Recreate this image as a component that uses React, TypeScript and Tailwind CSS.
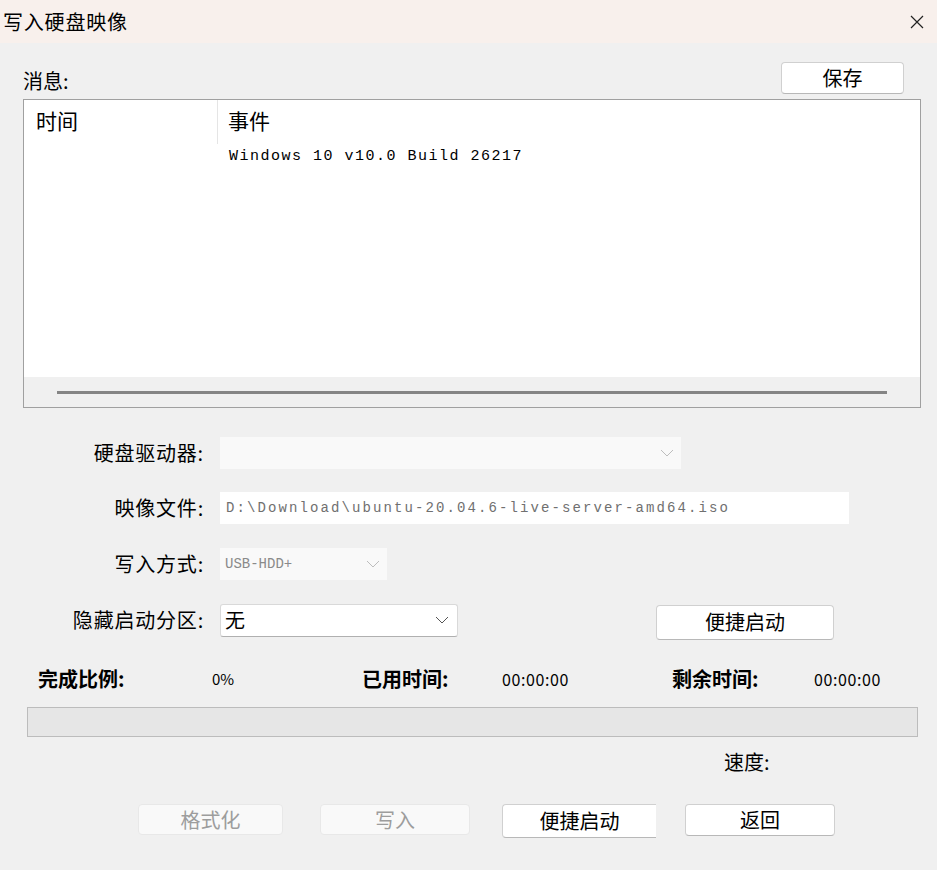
const cjk = "font-['Microsoft_YaHei','Noto_Sans_CJK_SC',sans-serif]";
const mono = "font-['Liberation_Mono','Noto_Sans_CJK_SC',monospace]";

function Chevron({ className }: { className?: string }) {
  return (
    <svg width="14" height="8" viewBox="0 0 14 8" className={className}>
      <path d="M1 1 L7 7 L13 1" fill="none" stroke="currentColor" strokeWidth="1" />
    </svg>
  );
}

function Btn({ label, disabled, className }: { label: string; disabled?: boolean; className?: string }) {
  return (
    <div
      className={
        "flex items-center justify-center rounded-[4px] border text-[20px] leading-none " +
        (disabled
          ? "border-[#e8e8e8] bg-[#f9f9f9] text-[#9d9d9d] "
          : "border-[#d0d0d0] border-b-[#b8b8b8] bg-white text-black ") +
        (className ?? "")
      }
    >
      {label}
    </div>
  );
}

export default function App() {
  return (
    <div className={"w-[937px] h-[870px] bg-[#f0f0f0] text-black " + cjk}>
      {/* title bar */}
      <div className="h-[43px] bg-[#f8f0ec] flex items-center justify-between pl-[3px] pr-[12px]">
        <span className="text-[20px] tracking-[0.8px]">写入硬盘映像</span>
        <svg width="16" height="16" viewBox="0 0 16 16">
          <path d="M2 2 L14 14 M14 2 L2 14" stroke="#222" strokeWidth="1.2" />
        </svg>
      </div>

      <div className="pl-[23px] pr-[16px]">
        <div className="flex items-end justify-between h-[56px] pb-[5px]">
          <span className="text-[20px] leading-none pb-[3px]">消息:</span>
          <Btn label="保存" className="w-[123px] h-[32px] mr-[17px]" />
        </div>

        {/* message list */}
        <div className="w-[898px] h-[309px] border border-[#a0a0a0] bg-white flex flex-col">
          <div className="flex h-[44px]">
            <div className="w-[194px] pl-[12px] pt-[10px] text-[21px] leading-none border-r border-[#e5e5e5]">时间</div>
            <div className="pl-[10px] pt-[10px] text-[21px] leading-none">事件</div>
          </div>
          <div className={"pl-[205px] pt-[2px] text-[15px] tracking-[1.5px] " + mono}>
            Windows 10 v10.0 Build 26217
          </div>
          <div className="flex-1" />
          <div className="h-[30px] bg-[#f0f0f0] flex items-center px-[33px]">
            <div className="h-[3px] w-full bg-[#858585]" />
          </div>
        </div>

        {/* form */}
        <div className="mt-[29px] flex flex-col">
          <div className="flex items-center h-[32px]">
            <span className="w-[181px] text-right text-[20px] tracking-[0.8px]">硬盘驱动器:</span>
            <div className="ml-[16px] w-[461px] h-[32px] bg-[#f9f9f9] flex items-center justify-end pr-[7px] text-[#bdbdbd]">
              <Chevron />
            </div>
          </div>
          <div className="flex items-center h-[32px] mt-[23px]">
            <span className="w-[181px] text-right text-[20px] tracking-[0.8px]">映像文件:</span>
            <div className={"ml-[16px] w-[629px] h-[32px] bg-white flex items-center pl-[6px] text-[14px] tracking-[2.1px] text-[#707070] " + mono}>
              D:\Download\ubuntu-20.04.6-live-server-amd64.iso
            </div>
          </div>
          <div className="flex items-center h-[32px] mt-[24px]">
            <span className="w-[181px] text-right text-[20px] tracking-[0.8px]">写入方式:</span>
            <div className={"ml-[16px] w-[167px] h-[32px] bg-[#f9f9f9] flex items-center justify-between pl-[5px] pr-[7px] text-[14px] text-[#8a8a8a] " + mono}>
              <span>USB-HDD+</span>
              <Chevron className="text-[#bdbdbd]" />
            </div>
          </div>
          <div className="flex items-center h-[34px] mt-[23px]">
            <span className="w-[181px] text-right text-[20px] tracking-[0.8px]">隐藏启动分区:</span>
            <div className="ml-[16px] w-[238px] h-[33px] bg-white border border-[#d9d9d9] border-b-[#b0b0b0] rounded-[3px] flex items-center justify-between pl-[4px] pr-[8px] text-[20px]">
              <span>无</span>
              <Chevron className="text-[#555]" />
            </div>
            <Btn label="便捷启动" className="ml-[198px] w-[178px] h-[35px] mt-[4px]" />
          </div>
        </div>

        {/* stats */}
        <div className="mt-[27px] h-[30px] flex items-center text-[20px]">
          <span className="font-bold w-[189px] pl-[15px]">完成比例:</span>
          <span className="w-[150px] text-[15px]">0%</span>
          <span className="font-bold w-[140px]">已用时间:</span>
          <span className="w-[170px] text-[16px] tracking-[0.6px]">00:00:00</span>
          <span className="font-bold w-[142px]">剩余时间:</span>
          <span className="text-[16px] tracking-[0.6px]">00:00:00</span>
        </div>

        <div className="mt-[13px] ml-[4px] w-[891px] h-[30px] bg-[#e6e6e6] border border-[#bcbcbc]" />

        <div className="mt-[12px] h-[26px] pl-[701px] text-[20px] leading-[26px]">速度:</div>

        <div className="mt-[29px] flex items-start h-[34px]">
          <Btn label="格式化" disabled className="ml-[115px] w-[145px] h-[31px]" />
          <Btn label="写入" disabled className="ml-[37px] w-[150px] h-[31px]" />
          <Btn label="便捷启动" className="ml-[32px] w-[154px] h-[34px] border-r-0 rounded-r-none" />
          <Btn label="返回" className="ml-[29px] w-[150px] h-[32px]" />
        </div>
      </div>
    </div>
  );
}
